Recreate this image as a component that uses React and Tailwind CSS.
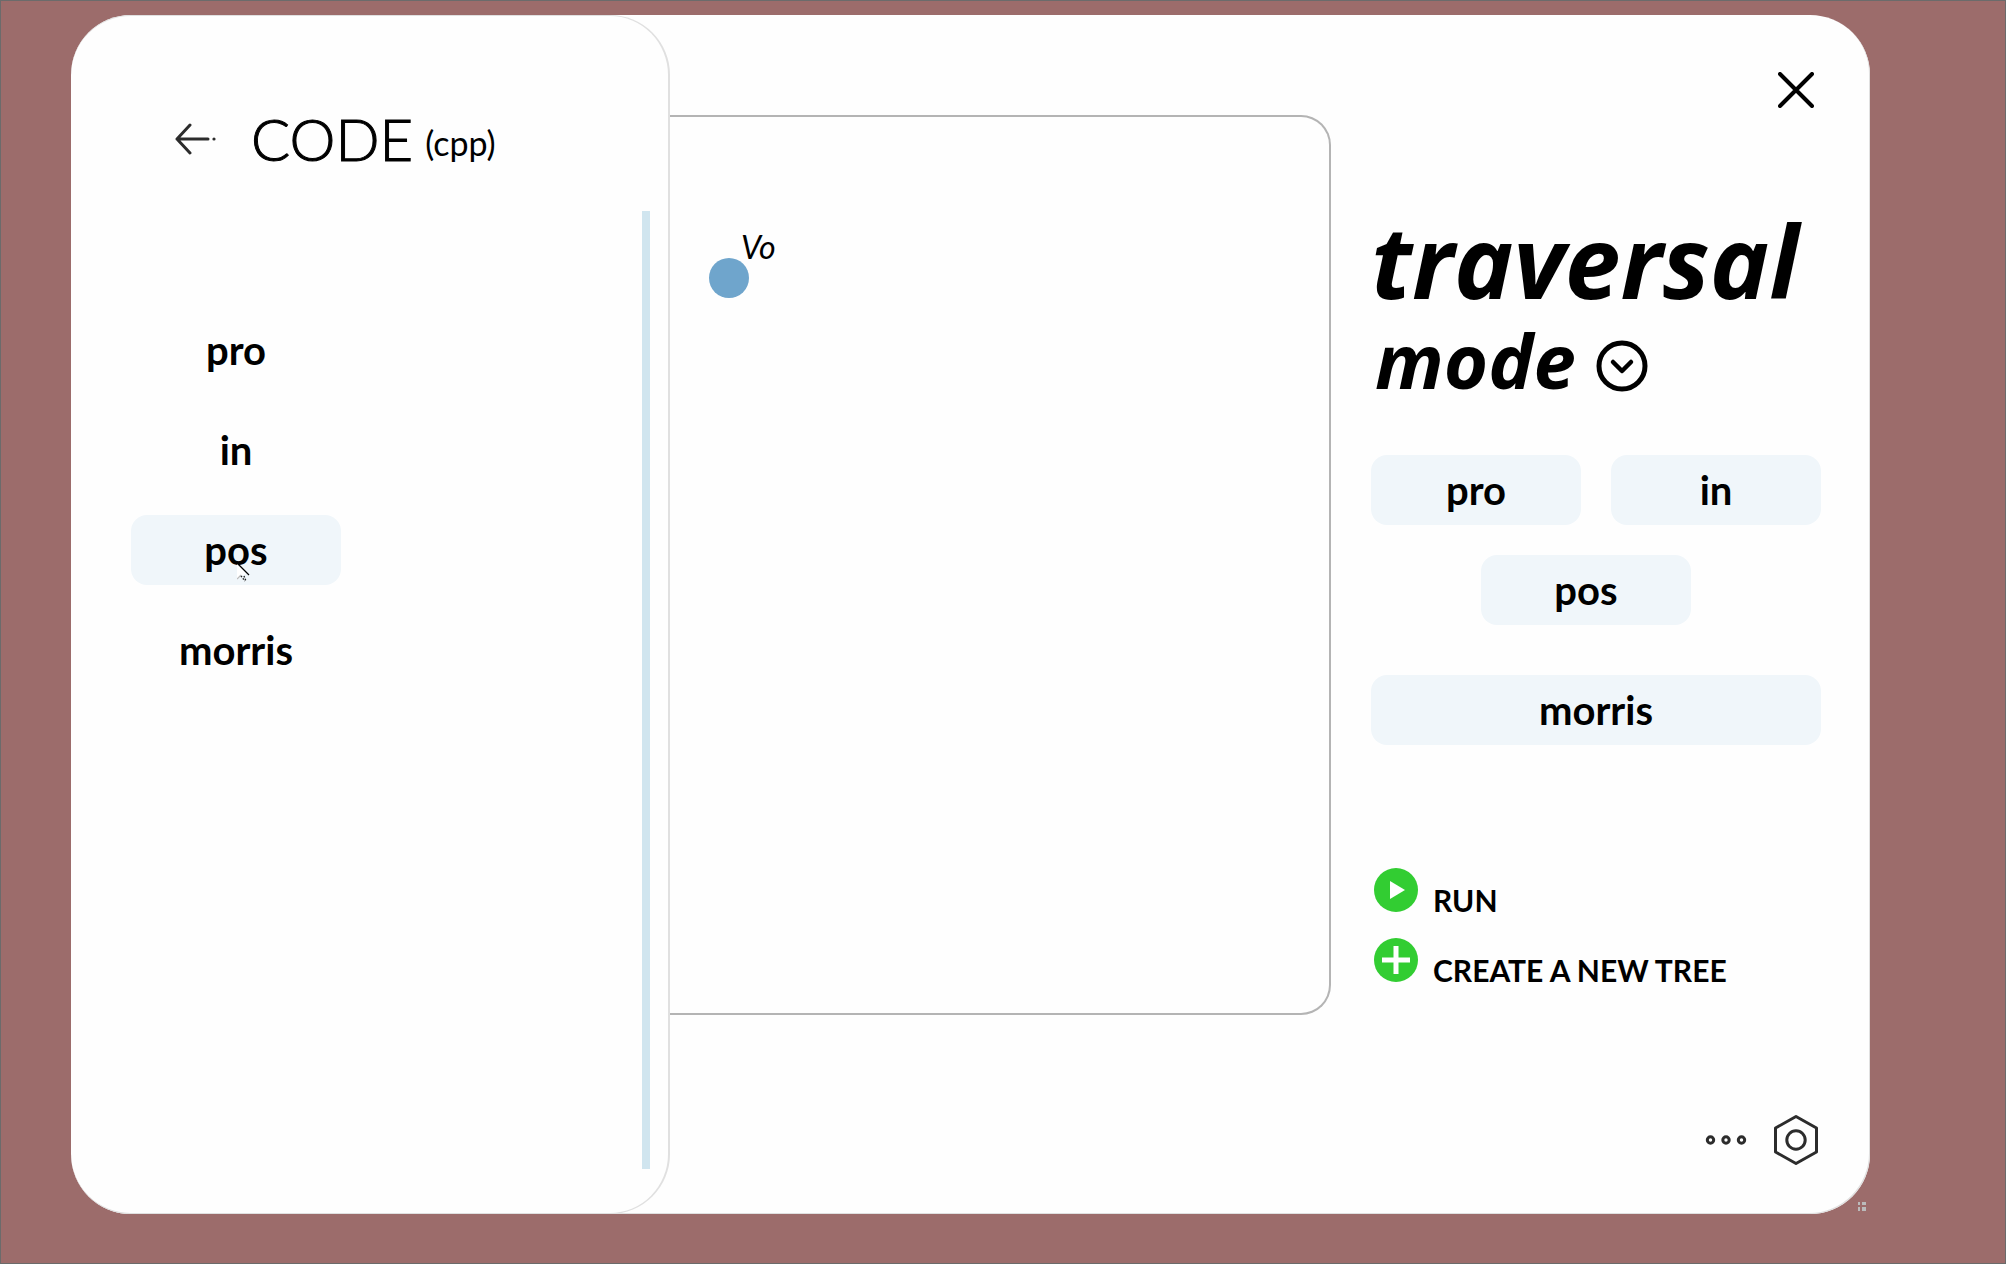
import React from "react";

const modes = ["pro", "in", "pos", "morris"];

function ModeButton({ label, className = "", children }) {
  return (
    <button
      type="button"
      className={`relative h-[70px] rounded-2xl text-center text-[40px] leading-none font-bold ${className}`}
    >
      {label}
      {children}
    </button>
  );
}

function Pointer() {
  return (
    <svg className="absolute top-12 left-[106px]" width="13" height="20" viewBox="0 0 13 20" aria-hidden="true">
      <path d="M0 1v15l4-4 3 0 2-2Z" fill="#fff" />
      <path d="M1 1 12 12" stroke="#000" strokeWidth="1.2" />
      <path d="M0 16 4 12" stroke="#bbb" strokeWidth="1.2" />
      <path d="M4 13l4 5M7 13l2 5" stroke="#222" strokeWidth="1.4" strokeDasharray="1.5 1.5" />
    </svg>
  );
}

function CodePanel() {
  return (
    <aside className="flex w-[599px] shrink-0 rounded-[60px] border-y border-r-2 border-[#e0e0e0] pr-[18px]">
      <div className="flex-1 pt-[94px] pl-[60px]">
        <header className="flex items-center">
          <button type="button" aria-label="Back" className="mr-[34px] ml-11">
            <svg width="42" height="32" viewBox="0 0 42 32" fill="none" stroke="#2c2c2c" strokeWidth="3" strokeLinecap="round" strokeLinejoin="round">
              <path d="M15 2 2 16l13 14M2 16h31" />
              <circle cx="39" cy="16" r="1.6" fill="#2c2c2c" stroke="none" />
            </svg>
          </button>
          <h1 className="text-[58px] leading-none font-light [-webkit-text-stroke:1px_black]">CODE</h1>
          <span className="ml-3 pt-2 text-[34px] leading-none">(cpp)</span>
        </header>
        <nav className="mt-[147px] flex w-[210px] flex-col gap-[30px]">
          {modes.map((mode) => (
            <ModeButton key={mode} label={mode} className={mode === "pos" ? "bg-[#f0f6fa]" : ""}>
              {mode === "pos" && <Pointer />}
            </ModeButton>
          ))}
        </nav>
      </div>
      <div className="mt-[195px] mb-11 w-2 bg-[#d0e5ef]" />
    </aside>
  );
}

function TreeCanvas() {
  return (
    <main className="mt-[100px] mb-[199px] flex-1 rounded-r-[30px] border-2 border-l-0 border-[#b4b4b4]">
      <figure className="relative mt-[141px] ml-[39px] size-10 rounded-full bg-[#6fa5cc]">
        <figcaption className="absolute bottom-[35px] left-8 text-[32px] leading-none italic">Vo</figcaption>
      </figure>
    </main>
  );
}

function ActionButton({ label, children }) {
  return (
    <button type="button" className="flex items-end gap-[15px] text-left text-[30px] leading-none font-bold">
      <svg width="44" height="44" viewBox="0 0 44 44" aria-hidden="true">
        <circle cx="22" cy="22" r="22" fill="#32cd32" />
        {children}
      </svg>
      <span className="leading-6">{label}</span>
    </button>
  );
}

function ControlPanel() {
  return (
    <section className="flex w-[539px] shrink-0 flex-col pt-[57px] pr-12 pb-12 pl-10">
      <button type="button" aria-label="Close" className="mr-2 self-end">
        <svg width="36" height="36" viewBox="0 0 36 36" fill="none" stroke="#000" strokeWidth="4" strokeLinecap="round">
          <path d="M2 2 34 34M34 2 2 34" />
        </svg>
      </button>
      <h2 className="mt-[102px] font-['Open_Sans',sans-serif] text-[100px] leading-[100px] font-bold italic">traversal</h2>
      <div className="mt-[5px] ml-1 flex items-center gap-5">
        <h3 className="font-['Open_Sans',sans-serif] text-[76px] leading-[90px] font-bold italic">mode</h3>
        <button type="button" aria-label="Choose mode" className="mt-3">
          <svg width="52" height="52" viewBox="0 0 52 52" fill="none" stroke="#000" strokeWidth="5" strokeLinecap="round" strokeLinejoin="round">
            <circle cx="26" cy="26" r="23" />
            <path d="m17 22 9 9 9-9" strokeWidth="4.5" />
          </svg>
        </button>
      </div>
      <div className="mt-[50px] grid w-[450px] grid-cols-2 gap-[30px]">
        <ModeButton label="pro" className="bg-[#f0f6fa]" />
        <ModeButton label="in" className="bg-[#f0f6fa]" />
        <ModeButton label="pos" className="col-span-2 ml-[110px] w-[210px] bg-[#f0f6fa]" />
        <ModeButton label="morris" className="col-span-2 mt-5 bg-[#f0f6fa]" />
      </div>
      <div className="mt-[123px] ml-[3px] flex flex-col items-start gap-[26px]">
        <ActionButton label="RUN">
          <path d="M16 13v18l15-9Z" fill="#fff" />
        </ActionButton>
        <ActionButton label="CREATE A NEW TREE">
          <path d="M22 8v28M8 22h28" stroke="#fff" strokeWidth="5" />
        </ActionButton>
      </div>
      <footer className="mt-auto mr-[3px] flex items-center justify-end gap-[26px]">
        <button type="button" aria-label="More">
          <svg width="42" height="12" viewBox="0 0 42 12" fill="none" stroke="#2c2c2c" strokeWidth="3">
            <circle cx="5.5" cy="6" r="3.2" />
            <circle cx="21" cy="6" r="3.2" />
            <circle cx="36.5" cy="6" r="3.2" />
          </svg>
        </button>
        <button type="button" aria-label="Settings">
          <svg width="46" height="52" viewBox="0 0 46 52" fill="none" stroke="#2c2c2c" strokeWidth="3" strokeLinejoin="round">
            <path d="M23 2.5 43.5 14v24L23 49.5 2.5 38V14Z" />
            <circle cx="23" cy="26" r="9.2" />
          </svg>
        </button>
      </footer>
    </section>
  );
}

export default function App() {
  return (
    <div className="flex min-h-screen border border-[#6b6b6b] bg-[#9c6c6b] pt-[14px] pr-[135px] pb-[49px] pl-[70px] font-[Lato,sans-serif] text-black">
      <div className="relative flex flex-1 rounded-[60px] bg-[#fefefe] shadow-[inset_-1px_-1px_0_#e0e0e0]">
        <CodePanel />
        <TreeCanvas />
        <ControlPanel />
        <svg className="absolute right-1 bottom-[3px]" width="8" height="9" viewBox="0 0 8 9" fill="#bbb" aria-hidden="true">
          <path d="M0 0h2v3H0ZM4 0h4v3H4ZM0 5h2v4H0ZM4 5h4v4H4Z" />
        </svg>
      </div>
    </div>
  );
}
